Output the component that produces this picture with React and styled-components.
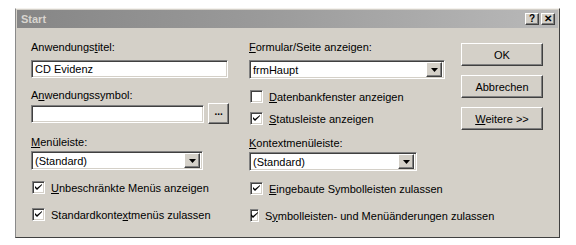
import React from "react";
import styled, { createGlobalStyle } from "styled-components";

const Global = createGlobalStyle`
  html, body { margin: 0; padding: 0; background: #ffffff; }
  body { font-family: "Liberation Sans", Arial, sans-serif; font-size: 11px; color: #000; }
`;

const Page = styled.div`
  width: 576px;
  height: 245px;
  padding: 8px 0 0 15px;
  box-sizing: border-box;
`;

const Window = styled.div`
  width: 545px;
  height: 230px;
  box-sizing: border-box;
  background: #d4d0c8;
  border-style: solid;
  border-width: 1px;
  border-color: #f4f2ee #404040 #404040 #8a8a8a;
  padding: 1px;
  display: flex;
  flex-direction: column;
`;

const TitleBar = styled.div`
  height: 18px;
  display: flex;
  align-items: center;
  padding: 0 3px 0 4px;
  background: linear-gradient(90deg, #868686 0%, #9a9a9a 45%, #b9b9b9 100%);
`;

const Title = styled.span`
  flex: 1;
  font-weight: bold;
  color: #d8d5cf;
  font-size: 11px;
`;

const CaptionButton = styled.div`
  width: 14px;
  height: 12px;
  box-sizing: border-box;
  display: flex;
  align-items: center;
  justify-content: center;
  background: #d4d0c8;
  border: 1px solid;
  border-color: #fff #404040 #404040 #fff;
  box-shadow: inset -1px -1px #808080;
  font-weight: bold;
  font-size: 10px;
  line-height: 1;
  margin-left: ${(p) => (p.$gap ? "2px" : "0")};
`;

const Body = styled.div`
  display: flex;
  padding: 13px 0 0 14px;
`;

const Column = styled.div`
  width: ${(p) => p.$w}px;
  display: flex;
  flex-direction: column;
  margin-right: ${(p) => p.$mr || 0}px;
`;

const Label = styled.div`
  height: 13px;
  line-height: 13px;
  margin-top: ${(p) => p.$mt || 0}px;
  white-space: nowrap;
`;

const Sunken = styled.div`
  box-sizing: border-box;
  width: ${(p) => p.$w}px;
  height: ${(p) => p.$h || 19}px;
  margin-top: ${(p) => p.$mt || 0}px;
  background: #fff;
  border: 1px solid;
  border-color: #808080 #fff #fff #808080;
  box-shadow: inset 1px 1px #404040, inset -1px -1px #d4d0c8;
  display: flex;
  align-items: center;
  padding-left: 3px;
  white-space: nowrap;
`;

const Row = styled.div`
  display: flex;
  align-items: center;
  gap: ${(p) => p.$gap || 0}px;
  margin-top: ${(p) => p.$mt || 0}px;
`;

const Raised = styled.div`
  box-sizing: border-box;
  background: #d4d0c8;
  border: 1px solid;
  border-color: #fff #404040 #404040 #fff;
  box-shadow: inset -1px -1px #808080;
  display: flex;
  align-items: center;
  justify-content: center;
`;

const DotsButton = styled(Raised)`
  width: 21px;
  height: 21px;
  font-weight: bold;
  font-size: 10px;
  line-height: 1;
  padding-bottom: 4px;
`;

const ArrowButton = styled(Raised)`
  width: 16px;
  height: 15px;
  margin-left: auto;
  margin-right: 0;
`;

const ComboBox = styled(Sunken)`
  padding-right: 2px;
`;

const CheckRow = styled.label`
  display: flex;
  align-items: center;
  height: 13px;
  margin-top: ${(p) => p.$mt || 0}px;
  margin-left: 1px;
  white-space: nowrap;
`;

const CheckBox = styled.span`
  box-sizing: border-box;
  width: 13px;
  height: 13px;
  margin-right: 6px;
  background: #fff;
  border: 1px solid;
  border-color: #808080 #fff #fff #808080;
  box-shadow: inset 1px 1px #404040, inset -1px -1px #d4d0c8;
  display: flex;
  align-items: center;
  justify-content: center;
`;

const ButtonColumn = styled.div`
  display: flex;
  flex-direction: column;
  gap: 9px;
  margin-top: 2px;
`;

const PushButton = styled(Raised)`
  width: 82px;
  height: 23px;
`;

const Key = styled.u`
  text-decoration: underline;
`;

function Arrow() {
  return (
    <ArrowButton>
      <svg width="7" height="4" viewBox="0 0 7 4">
        <path d="M0 0h7L3.5 4z" fill="#000" />
      </svg>
    </ArrowButton>
  );
}

function Combo({ w, value, mt }) {
  return (
    <ComboBox $w={w} $mt={mt}>
      <span>{value}</span>
      <Arrow />
    </ComboBox>
  );
}

function Check({ checked, children, mt }) {
  return (
    <CheckRow $mt={mt}>
      <CheckBox>
        {checked && (
          <svg width="7" height="7" viewBox="0 0 7 7">
            <path d="M0 2v2l2 2 5-5V0L2 4z" fill="#000" />
          </svg>
        )}
      </CheckBox>
      <span>{children}</span>
    </CheckRow>
  );
}

export default function App() {
  return (
    <Page>
      <Global />
      <Window>
        <TitleBar>
          <Title>Start</Title>
          <CaptionButton>?</CaptionButton>
          <CaptionButton $gap>✕</CaptionButton>
        </TitleBar>
        <Body>
          <Column $w={198} $mr={20}>
            <Label>
              Anwendungs<Key>t</Key>itel:
            </Label>
            <Sunken $w={197} $h={18} $mt={6}>
              CD Evidenz
            </Sunken>
            <Label $mt={11}>
              A<Key>n</Key>wendungssymbol:
            </Label>
            <Row $gap={4} $mt={1}>
              <Sunken $w={175} $h={18} />
              <DotsButton>...</DotsButton>
            </Row>
            <Label $mt={12}>
              <Key>M</Key>enüleiste:
            </Label>
            <Combo w={172} value="(Standard)" mt={2} />
            <Check checked mt={11}>
              <Key>U</Key>nbeschränkte Menüs anzeigen
            </Check>
            <Check checked mt={14}>
              Standardkonte<Key>x</Key>tmenüs zulassen
            </Check>
          </Column>
          <Column $w={196} $mr={16}>
            <Label>
              <Key>F</Key>ormular/Seite anzeigen:
            </Label>
            <Combo w={196} value="frmHaupt" mt={6} />
            <Check mt={11}>
              <Key>D</Key>atenbankfenster anzeigen
            </Check>
            <Check checked mt={9}>
              <Key>S</Key>tatusleiste anzeigen
            </Check>
            <Label $mt={12}>
              <Key>K</Key>ontextmenüleiste:
            </Label>
            <Combo w={168} value="(Standard)" mt={2} />
            <Check checked mt={11}>
              <Key>E</Key>ingebaute Symbolleisten zulassen
            </Check>
            <Check checked mt={14}>
              S<Key>y</Key>mbolleisten- und Menüänderungen zulassen
            </Check>
          </Column>
          <ButtonColumn>
            <PushButton>OK</PushButton>
            <PushButton>Abbrechen</PushButton>
            <PushButton>
              <span>
                <Key>W</Key>eitere &gt;&gt;
              </span>
            </PushButton>
          </ButtonColumn>
        </Body>
      </Window>
    </Page>
  );
}
